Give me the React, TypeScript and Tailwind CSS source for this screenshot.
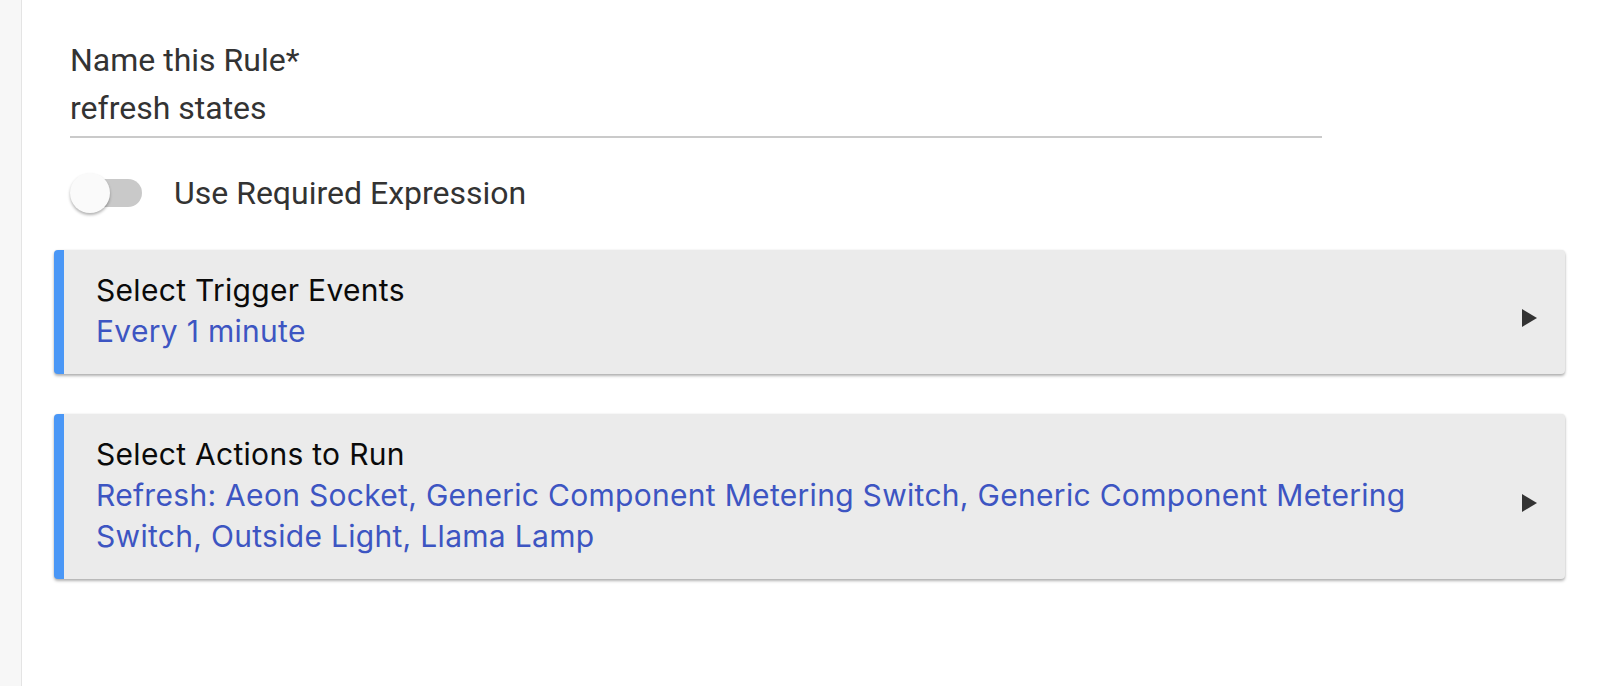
const Arrow = () => (
  <svg width="15" height="18" viewBox="0 0 15 18" className="shrink-0">
    <polygon points="0,0 15,9 0,18" fill="#333333" />
  </svg>
)

interface CardProps {
  title: string
  lines: string
}

function SectionCard({ title, lines }: CardProps) {
  return (
    <div className="flex items-center rounded-[4px] border-l-[10px] border-[#4a97f6] bg-[#ebebeb] pl-[32px] pr-[28px] pt-[20px] pb-[22px] shadow-[0_2px_3px_rgba(0,0,0,0.3),0_0_2px_rgba(0,0,0,0.08)]">
      <div className="flex-1 pr-[60px] font-['Inter',sans-serif] text-[30px] leading-[41px] tracking-[0.3px]">
        <div className="text-[#0a0a0a]">{title}</div>
        <div className="text-[#3d55c2]">{lines}</div>
      </div>
      <div className="pt-[14px]">
        <Arrow />
      </div>
    </div>
  )
}

export default function App() {
  return (
    <div className="flex h-[686px] w-full bg-white font-['Roboto',sans-serif]">
      {/* left rail */}
      <div className="w-[22px] shrink-0 border-r border-[#e4e4e4] bg-[#f7f7f7]" />

      <div className="w-[1543px] pl-[32px] pt-[42px]">
        {/* rule name */}
        <div className="ml-[16px] w-[1252px] border-b-2 border-[#cacaca] pb-[10px] text-[32px] leading-[36px] text-[#333333]">
          <div>Name this Rule*</div>
          <div className="mt-[12px]">refresh states</div>
        </div>

        {/* switch */}
        <div className="mt-[35px] flex h-[40px] items-center">
          <div className="relative ml-[16px] h-[40px] w-[72px]">
            <div className="absolute left-[6px] right-0 top-[6px] h-[28px] rounded-full bg-[#c9c9c9]" />
            <div className="absolute left-0 top-0 h-[40px] w-[40px] rounded-full bg-[#fafafa] shadow-[0_2px_3px_rgba(0,0,0,0.3)]" />
          </div>
          <span className="ml-[32px] text-[32px] leading-[36px] text-[#333333]">Use Required Expression</span>
        </div>

        <div className="mt-[37px]">
          <SectionCard title="Select Trigger Events" lines="Every 1 minute" />
        </div>
        <div className="mt-[40px]">
          <SectionCard
            title="Select Actions to Run"
            lines="Refresh: Aeon Socket, Generic Component Metering Switch, Generic Component Metering Switch, Outside Light, Llama Lamp"
          />
        </div>
      </div>
    </div>
  )
}
